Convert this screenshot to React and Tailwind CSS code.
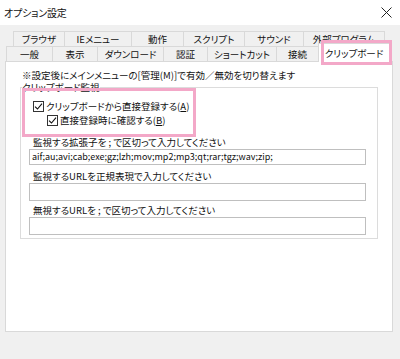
import React from "react";

const rowOne = [
  { label: "ブラウザ", w: 52 },
  { label: "IEメニュー", w: 68 },
  { label: "動作", w: 53 },
  { label: "スクリプト", w: 62 },
  { label: "サウンド", w: 60 },
  { label: "外部プログラム", w: 82 },
];

const rowTwo = [
  { label: "一般", w: 47 },
  { label: "表示", w: 46 },
  { label: "ダウンロード", w: 67 },
  { label: "認証", w: 45 },
  { label: "ショートカット", w: 70 },
  { label: "接続", w: 43 },
];

// チェックボックス（チェック済み）
const CheckBox = () => (
  <span className="inline-flex w-[11px] h-[11px] border border-[#333] bg-white items-center justify-center shrink-0">
    <svg width="9" height="9" viewBox="0 0 9 9">
      <path d="M1 4.6 L3.5 7 L8 1.6" fill="none" stroke="#111" strokeWidth="1.1" />
    </svg>
  </span>
);

const TextBox = ({ value, h }) => (
  <div className={`ml-[8px] w-[337px] ${h} border border-[#bfbfbf] bg-white px-[2px] flex items-center text-[9px] text-[#111] overflow-hidden whitespace-nowrap`}>
    {value}
  </div>
);

export default function App() {
  return (
    <div className="relative w-[400px] h-[359px] overflow-hidden bg-[#f0f0f0] text-[#111] font-['Noto_Sans_CJK_JP','Noto_Sans',sans-serif] [font-feature-settings:'palt'] text-[9.5px] leading-[12px]">
      {/* タイトルバー */}
      <div className="h-[25px] bg-white flex items-center justify-between pl-[4px] pr-[8px]">
        <span className="text-[10px] tracking-[-0.2px]">オプション設定</span>
        <svg width="11" height="11" viewBox="0 0 11 11">
          <path d="M0.5 0.5 L10.5 10.5 M10.5 0.5 L0.5 10.5" stroke="#222" strokeWidth="1" />
        </svg>
      </div>

      {/* タブ 1段目 */}
      <div className="flex pl-[13px] pt-[6px] h-[21px]">
        {rowOne.map((t) => (
          <div
            key={t.label}
            style={{ width: t.w }}
            className="h-[15px] -ml-px first:ml-0 border border-b-0 border-[#d9d9d9] bg-[#f0f0f0] flex items-center justify-center"
          >
            {t.label}
          </div>
        ))}
      </div>

      {/* タブ 2段目 */}
      <div className="flex items-end pl-[6px] h-[15px] relative z-10">
        {rowTwo.map((t) => (
          <div
            key={t.label}
            style={{ width: t.w }}
            className="h-[15px] -ml-px first:ml-0 border border-b-0 border-[#d9d9d9] bg-[#f0f0f0] flex items-center justify-center"
          >
            {t.label}
          </div>
        ))}
        <div className="w-[72px] h-[19px] -ml-px -mb-px border border-b-0 border-[#d9d9d9] bg-white flex items-center justify-center pb-[1px]">
          クリップボード
        </div>
      </div>

      {/* パネル */}
      <div className="ml-[5px] w-[388px] h-[271px] bg-white border border-[#d9d9d9] pt-[7px] pl-[16px]">
        <div>※設定後にメインメニューの[管理(M)]で有効／無効を切り替えます</div>

        <fieldset className="mt-[0px] -ml-[2px] w-[358px] h-[158px] border border-[#dcdcdc] px-0 pb-0">
          <legend className="ml-[1px] px-0 leading-[12px]">クリップボード監視</legend>
          <div className="flex flex-col">
            <label className="flex items-center gap-[2px] pl-[12px] mt-[6px] h-[14px]">
              <CheckBox />
              <span>
                クリップボードから直接登録する(<span className="underline">A</span>)
              </span>
            </label>
            <label className="flex items-center gap-[2px] pl-[26px] h-[14px]">
              <CheckBox />
              <span>
                直接登録時に確認する(<span className="underline">B</span>)
              </span>
            </label>

            <div className="pl-[12px] mt-[8px] h-[14px] flex items-center">監視する拡張子を ; で区切って入力してください</div>
            <TextBox h="h-[16px]" value="aif;au;avi;cab;exe;gz;lzh;mov;mp2;mp3;qt;rar;tgz;wav;zip;" />

            <div className="pl-[12px] mt-[4px] h-[14px] flex items-center">監視するURLを正規表現で入力してください</div>
            <TextBox h="h-[18px]" value="" />

            <div className="pl-[12px] mt-[2px] h-[14px] flex items-center">無視するURLを ; で区切って入力してください</div>
            <TextBox h="h-[18px]" value="" />
          </div>
        </fieldset>
      </div>

      {/* 強調枠（注釈） */}
      <div className="absolute left-[321px] top-[40px] w-[71px] h-[25px] border-[3px] border-[#f3a8c8] z-20 pointer-events-none" />
      <div className="absolute left-[22px] top-[88px] w-[174px] h-[49px] border-[3px] border-[#f3a8c8] z-20 pointer-events-none" />
    </div>
  );
}
